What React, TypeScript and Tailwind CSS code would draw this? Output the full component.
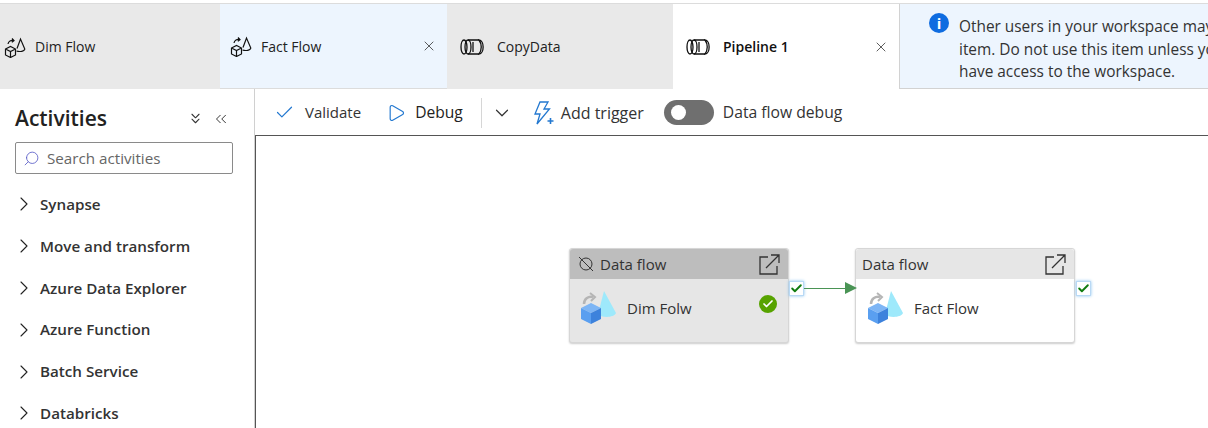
import { Check, ChevronDown, ChevronRight, ChevronsDown, ChevronsLeft, Play, Search, X } from "lucide-react";

function FlowIcon() {
  return (
    <svg width="22" height="22" viewBox="0 0 22 22" fill="none" stroke="#111" strokeWidth="1.2" className="shrink-0">
      <path d="M1.5 13 L6.5 10.5 L11.5 13 V19 L6.5 21.5 L1.5 19 Z M1.5 13 L6.5 15.5 L11.5 13 M6.5 15.5 V21.5" />
      <path d="M13 12.5 L16.5 3 L20.8 13 C20.5 15.5 15.5 16 12.5 15" />
      <path d="M4 8 C4.5 5 7 4 9.5 4.5 M8 2.5 L10 4.6 L7.8 6.2" />
    </svg>
  );
}

function PipelineIcon() {
  return (
    <svg width="25" height="18" viewBox="0 0 25 18" fill="none" stroke="#111" strokeWidth="1.3" className="shrink-0">
      <ellipse cx="4" cy="9" rx="3" ry="7" />
      <ellipse cx="8" cy="9" rx="3" ry="7" />
      <path d="M8 2 H19 M8 16 H19 M13 4 L13 14" />
      <path d="M19 2 C24.5 2 24.5 16 19 16 C22 12 22 6 19 2 Z" />
    </svg>
  );
}

function ColorFlowIcon() {
  return (
    <svg width="36" height="34" viewBox="0 0 36 34" className="shrink-0">
      <path d="M23 0 L35 22 C33 27 20 27 17 23 Z" fill="#9ee9fb" />
      <path d="M3 13 C3 8 7 5 12 6" fill="none" stroke="#b5b5b5" strokeWidth="2.5" />
      <path d="M9 2 L14 6 L10 10" fill="none" stroke="#b5b5b5" strokeWidth="2" />
      <path d="M0 17 L10 12 L20 17 L10 22 Z" fill="#7db5f5" />
      <path d="M0 17 L10 22 V33 L0 28 Z" fill="#5a9ff0" />
      <path d="M20 17 L10 22 V33 L20 28 Z" fill="#3d82dc" />
    </svg>
  );
}

function TriggerIcon() {
  return (
    <svg width="21" height="24" viewBox="0 0 21 24" fill="none" stroke="#2378d0" strokeWidth="1.3">
      <path d="M7 1 H15 L11 8 H16.5 L4 23 L7 13 H2 Z" />
      <path d="M14.5 20 H20.5 M17.5 17 V23" strokeWidth="1.6" />
    </svg>
  );
}

function OpenIcon() {
  return (
    <svg width="21" height="21" viewBox="0 0 21 21" fill="none" stroke="#333" strokeWidth="1.3" className="ml-auto shrink-0">
      <path d="M9 3 H1 V20 H18 V12" />
      <path d="M7 14 L20 1 M12 1 H20 V9" />
    </svg>
  );
}

function Tab({ label, icon, bg, bold, close }: { label: string; icon: React.ReactNode; bg: string; bold?: boolean; close?: boolean }) {
  return (
    <div className={`flex items-center h-full pr-[10px] ${bg}`}>
      {icon}
      <span className={`text-[14px] ${bold ? "font-semibold text-[#111]" : "text-[#222]"}`}>{label}</span>
      {close && <X size={16} strokeWidth={1.2} className="ml-auto text-[#333]" />}
    </div>
  );
}

function Port() {
  return (
    <div className="flex items-center justify-center w-[15px] h-[15px] bg-white border border-[#b9d9f5] shadow-[0_0_3px_#8cc4f0]">
      <Check size={13} strokeWidth={3.5} className="text-[#107c10]" />
    </div>
  );
}

function FlowNode({ name, selected, className }: { name: string; selected?: boolean; className: string }) {
  return (
    <div className={`absolute top-[112px] w-[220px] h-[95px] rounded-[3px] border border-[#d6d6d6] shadow-[0_1px_2px_#ccc] ${selected ? "bg-[#e6e6e6]" : "bg-white"} ${className}`}>
      <div className={`flex items-center h-[30px] rounded-t-[3px] ${selected ? "bg-[#bdbdbd] pl-[7px]" : "bg-[#e6e6e6] pl-[6px]"} pr-[8px]`}>
        {selected && (
          <svg width="18" height="18" viewBox="0 0 18 18" fill="none" stroke="#333" strokeWidth="1" className="mr-[5px]">
            <circle cx="9" cy="9" r="6" />
            <path d="M2 2 L16 16" />
          </svg>
        )}
        <span className="text-[15px] text-[#333]">Data flow</span>
        <OpenIcon />
      </div>
      <div className={`flex items-center h-[58px] ${selected ? "pl-[11px]" : "pl-[12px]"}`}>
        <ColorFlowIcon />
        <span className="ml-[10px] text-[15px] text-[#333]">{name}</span>
        {selected && (
          <div className="ml-auto mr-[11px] mb-[9px] flex items-center justify-center w-[18px] h-[18px] rounded-full bg-[#57a300]">
            <Check size={12} strokeWidth={3.5} className="text-white" />
          </div>
        )}
      </div>
    </div>
  );
}

const groups = ["Synapse", "Move and transform", "Azure Data Explorer", "Azure Function", "Batch Service", "Databricks"];

export default function App() {
  return (
    <div className="w-[1208px] h-[428px] overflow-hidden bg-white font-['Open_Sans',sans-serif] pt-[3px]">
      {/* Tabs */}
      <div className="grid grid-cols-[220px_227px_226px_226px_309px] h-[86px] border-t border-[#dcdcdc]">
        <Tab label="Dim Flow" bg="bg-[#e9e9e9]" icon={<span className="ml-[4px] mr-[9px] flex"><FlowIcon /></span>} />
        <Tab label="Fact Flow" close bg="bg-[#edf5fe] border-b border-[#dcdcdc]" icon={<span className="ml-[10px] mr-[9px] flex"><FlowIcon /></span>} />
        <Tab label="CopyData" bg="bg-[#e9e9e9]" icon={<span className="ml-[13px] mr-[12px] flex"><PipelineIcon /></span>} />
        <Tab label="Pipeline 1" bold close bg="bg-white" icon={<span className="ml-[13px] mr-[12px] flex"><PipelineIcon /></span>} />
        <div className="flex bg-[#edf5fe] border-b border-l border-[#d2d2d2] pl-[29px] pt-[9px] overflow-hidden">
          <div className="mr-[10px] flex items-center justify-center w-[20px] h-[20px] rounded-full bg-[#0f6ce0] shrink-0">
            <span className="text-white text-[15px] font-bold leading-none">i</span>
          </div>
          <p className="mt-[3px] text-[15.4px] leading-[22.5px] text-[#333] whitespace-nowrap">
            Other users in your workspace may
            <br />
            item. Do not use this item unless you
            <br />
            have access to the workspace.
          </p>
        </div>
      </div>

      <div className="flex h-[339px]">
        {/* Activities */}
        <aside className="w-[255px] shrink-0 border-r border-[#d0d0d0] pl-[15px] pr-[21px]">
          <div className="flex items-center h-[53px] pt-[6px]">
            <h2 className="text-[21px] font-semibold text-[#222]">Activities</h2>
            <ChevronsDown size={17} strokeWidth={1.5} className="ml-auto text-[#333]" />
            <ChevronsLeft size={18} strokeWidth={1.3} className="ml-[8px] mr-[3px] text-[#333]" />
          </div>
          <div className="flex items-center w-[218px] h-[32px] border border-[#8a8a8a] rounded-[2px] pl-[7px]">
            <Search size={17} strokeWidth={1.2} className="text-[#5b5fc7] -scale-x-100" />
            <span className="ml-[7px] mt-[1px] text-[15.2px] text-[#666]">Search activities</span>
          </div>
          <div className="mt-[9px] flex flex-col">
            {groups.map((g) => (
              <div key={g} className="flex items-center h-[41.8px] pt-[1px]">
                <ChevronRight size={24} strokeWidth={1.1} className="-ml-[3px] mr-[4px] text-[#222]" />
                <span className="text-[15.2px] font-semibold text-[#333]">{g}</span>
              </div>
            ))}
          </div>
        </aside>

        <div className="flex-1 flex flex-col">
          {/* Toolbar */}
          <div className="flex items-center h-[46px] shrink-0 pl-[19px] pt-[1px] text-[#333]">
            <Check size={21} strokeWidth={1.4} className="text-[#2378d0]" />
            <span className="ml-[10px] text-[15px]">Validate</span>
            <Play size={20} strokeWidth={1.4} className="ml-[25px] text-[#2378d0]" />
            <span className="ml-[9px] text-[15.6px] text-[#222]">Debug</span>
            <div className="ml-[18px] w-px h-[30px] bg-[#d6d6d6]" />
            <ChevronDown size={22} strokeWidth={1.3} className="ml-[9px] text-[#333]" />
            <span className="ml-[20px] flex"><TriggerIcon /></span>
            <span className="ml-[7px] text-[16px]">Add trigger</span>
            <div className="ml-[20px] flex items-center w-[50px] h-[25px] rounded-full bg-[#6f6f6f] pl-[7px]">
              <div className="w-[15px] h-[15px] rounded-full bg-white" />
            </div>
            <span className="ml-[9px] text-[15.7px]">Data flow debug</span>
          </div>

          {/* Canvas */}
          <div className="relative flex-1 border-t border-l border-[#555]">
            <FlowNode name="Dim Folw" selected className="left-[313px]" />
            <FlowNode name="Fact Flow" className="left-[600px] -translate-x-px" />
            <div className="absolute left-[533px] top-[145px]"><Port /></div>
            <div className="absolute left-[820px] top-[145px]"><Port /></div>
            <div className="absolute left-[548px] top-[152px] w-[42px] h-px bg-[#4a9455]" />
            <div className="absolute left-[589px] top-[146px] w-0 h-0 border-y-[6px] border-y-transparent border-l-[12px] border-l-[#4a9455]" />
          </div>
        </div>
      </div>
    </div>
  );
}
